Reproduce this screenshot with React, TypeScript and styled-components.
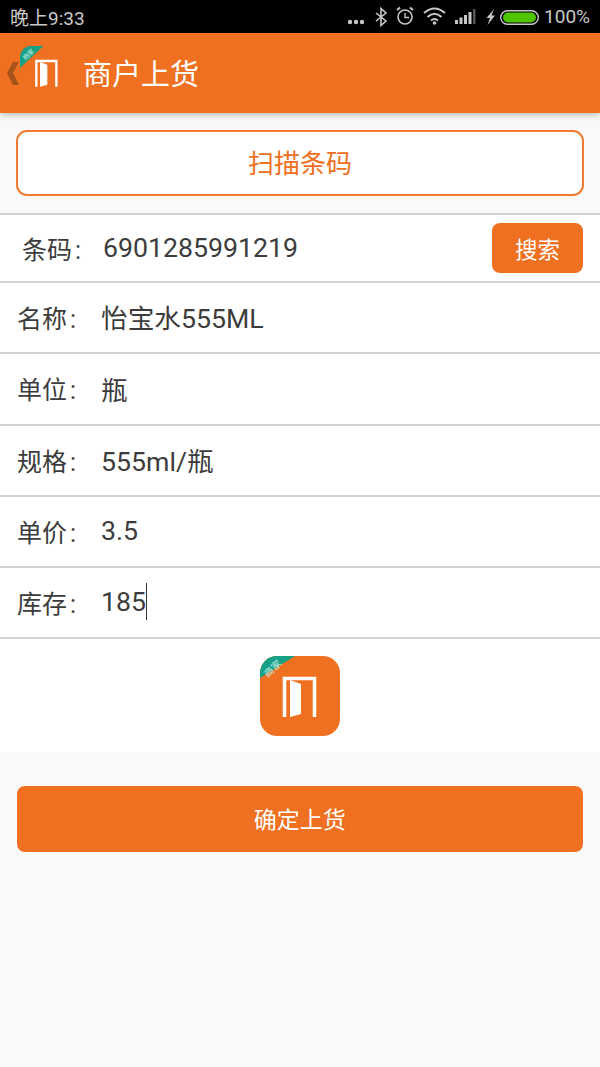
import React from 'react';
import styled, { createGlobalStyle } from 'styled-components';

const ORANGE = '#ef7020';
const FONT = 'Roboto, "Noto Sans CJK SC", sans-serif';

const GlobalStyle = createGlobalStyle`
  html, body {
    margin: 0;
    padding: 0;
    background: #f9f9f9;
  }
  body {
    font-family: ${FONT};
  }
`;

const Page = styled.div`
  width: 600px;
  height: 1067px;
  overflow: hidden;
  background: #f9f9f9;
  display: flex;
  flex-direction: column;
`;

const StatusBar = styled.div`
  height: 33px;
  flex: none;
  background: #000;
  color: #c8c8c8;
  display: flex;
  align-items: center;
  padding: 0 10px;
  box-sizing: border-box;
  font-size: 19px;
`;

const StatusTime = styled.span`
  flex: 1;
`;

const StatusIcons = styled.div`
  display: flex;
  align-items: center;
`;

const Percent = styled.span`
  margin-left: 5px;
`;

const Header = styled.div`
  height: 80px;
  flex: none;
  background: ${ORANGE};
  box-shadow: 0 2px 6px rgba(0, 0, 0, 0.25);
  display: flex;
  align-items: center;
  position: relative;
  z-index: 1;
`;

const BackWrap = styled.div`
  width: 83px;
  height: 56px;
  flex: none;
`;

const Title = styled.div`
  color: #fff;
  font-size: 29px;
  line-height: 40px;
  padding-top: 3px;
`;

const Content = styled.div`
  display: flex;
  flex-direction: column;
  padding-top: 17px;
`;

const ScanButton = styled.div`
  height: 66px;
  margin: 0 16px 17px;
  padding-bottom: 3px;
  box-sizing: border-box;
  border: 2px solid #f37b2f;
  border-radius: 11px;
  background: #fff;
  color: ${ORANGE};
  font-size: 26px;
  display: flex;
  align-items: center;
  justify-content: center;
`;

const Form = styled.div`
  background: #fff;
  border-top: 2px solid #d2d2d2;
`;

const Row = styled.div<{ $h: number; $first?: boolean }>`
  height: ${(p) => p.$h}px;
  box-sizing: border-box;
  border-bottom: 2px solid #d2d2d2;
  display: flex;
  align-items: center;
  padding: 0 17px ${(p) => (p.$first ? 0 : 2)}px ${(p) => (p.$first ? 22 : 17)}px;
  font-size: 25px;
  color: #3c3c3c;
`;

const Label = styled.span<{ $first?: boolean }>`
  width: ${(p) => (p.$first ? 81 : 84)}px;
  flex: none;
`;

const Colon = styled.span`
  margin-left: 3px;
`;

const Value = styled.span`
  flex: 1;
  display: flex;
  align-items: center;
  font-size: 26.7px;
`;

const Caret = styled.span`
  width: 1px;
  height: 37px;
  background: #333;
`;

const SearchButton = styled.div`
  width: 91px;
  height: 50px;
  border-radius: 8px;
  background: ${ORANGE};
  color: #fff;
  font-size: 22.5px;
  display: flex;
  align-items: center;
  justify-content: center;
`;

const PhotoRow = styled.div`
  height: 113px;
  background: #fff;
  display: flex;
  justify-content: center;
  padding-top: 17px;
  box-sizing: border-box;
`;

const ConfirmButton = styled.div`
  height: 66px;
  margin: 34px 17px 0 16.5px;
  padding-bottom: 2px;
  box-sizing: border-box;
  border-radius: 8px;
  background: ${ORANGE};
  color: #fff;
  font-size: 23px;
  display: flex;
  align-items: center;
  justify-content: center;
`;

// door logo with the green 商家 corner ribbon, 80 unit box
const Logo = ({ size, plain, tip }: { size: number; plain?: boolean; tip: number }) => (
  <svg width={size} height={size} viewBox="0 0 80 80">
    {!plain && <rect width="80" height="80" rx="17" fill={ORANGE} />}
    <path d={`M0 ${tip} V17 A17 17 0 0 1 17 0 H35 Z`} fill="#16a085" />
    <text
      x="12"
      y="12"
      fontSize="10"
      fill="#c9efe4"
      textAnchor="middle"
      dominantBaseline="central"
      fontFamily='"Noto Sans CJK SC", sans-serif'
      transform="rotate(-45 12 12)"
    >
      商家
    </text>
    <path d="M24.5 61 V22.5 H54.5 V61" fill="none" stroke="#fff" strokeWidth="3.5" />
    <path d="M30 24 L41 28 V58 L30 61 Z" fill="#fff" />
  </svg>
);

const StatusGlyphs = () => (
  <svg width="205" height="24" viewBox="0 0 205 24">
    <circle cx="16" cy="17" r="2.2" fill="#c8c8c8" />
    <circle cx="22" cy="17" r="2.2" fill="#c8c8c8" />
    <circle cx="28" cy="17" r="2.2" fill="#c8c8c8" />
    <path d="M42 8 L52 16 L47 20.5 V3.5 L52 8 L42 16" fill="none" stroke="#c8c8c8" strokeWidth="1.6" />
    <circle cx="71" cy="12" r="7" fill="none" stroke="#c8c8c8" strokeWidth="1.6" />
    <path d="M71 8 V12.5 H75" fill="none" stroke="#c8c8c8" strokeWidth="1.4" />
    <path d="M63 5 L66 2.5 M79 5 L76 2.5" stroke="#c8c8c8" strokeWidth="2" />
    <path d="M90 8 Q100.5 -1 111 8 M93.5 12 Q100.5 5.5 107.5 12 M97 15.5 Q100.5 12.5 104 15.5" fill="none" stroke="#c8c8c8" strokeWidth="2" />
    <circle cx="100.5" cy="18" r="1.8" fill="#c8c8c8" />
    <path d="M121 15h3v4h-3z M125.5 12.5h3v6.500h-3z M130 10h3v9h-3z M134.500 7h3v12h-3z" fill="#c8c8c8" />
    <path d="M139 4h2.500v15h-2.500z" fill="#555" />
    <path d="M160 4 L152.500 13 H156 L153.500 20 L161 10.500 H157.500 Z" fill="#c8c8c8" />
    <rect x="166.700" y="5.700" width="37.600" height="13.600" rx="6.800" fill="none" stroke="#c8c8c8" strokeWidth="1.400" />
    <rect x="169" y="7.500" width="33" height="10" rx="5" fill="#4fc400" />
  </svg>
);

const rows = [
  { label: '名称', value: '怡宝水555ML', h: 71 },
  { label: '单位', value: '瓶', h: 72 },
  { label: '规格', value: '555ml/瓶', h: 71 },
  { label: '单价', value: '3.5', h: 71 },
];

const App = () => {
  return (
    <Page>
      <GlobalStyle />
      <StatusBar>
        <StatusTime>晚上9:33</StatusTime>
        <StatusIcons>
          <StatusGlyphs />
          <Percent>100%</Percent>
        </StatusIcons>
      </StatusBar>
      <Header>
        <BackWrap>
          <svg width="83" height="56" viewBox="0 0 83 56">
            <path d="M13 17 H19 L13 28 L19 40 H13 L7 28 Z" fill="#a8531c" />
            <g transform="translate(20 1) scale(0.667)">
              <Logo size={80} plain tip={33} />
            </g>
          </svg>
        </BackWrap>
        <Title>商户上货</Title>
      </Header>
      <Content>
        <ScanButton>扫描条码</ScanButton>
        <Form>
          <Row $h={68} $first>
            <Label $first>
              条码<Colon>:</Colon>
            </Label>
            <Value>6901285991219</Value>
            <SearchButton>搜索</SearchButton>
          </Row>
          {rows.map((row, i) => (
            <Row key={i} $h={row.h}>
              <Label>
                {row.label}
                <Colon>:</Colon>
              </Label>
              <Value>{row.value}</Value>
            </Row>
          ))}
          <Row $h={71}>
            <Label>
              库存<Colon>:</Colon>
            </Label>
            <Value>
              185
              <Caret />
            </Value>
          </Row>
          <PhotoRow>
            <Logo size={80} tip={22} />
          </PhotoRow>
        </Form>
        <ConfirmButton>确定上货</ConfirmButton>
      </Content>
    </Page>
  );
};

export default App;
